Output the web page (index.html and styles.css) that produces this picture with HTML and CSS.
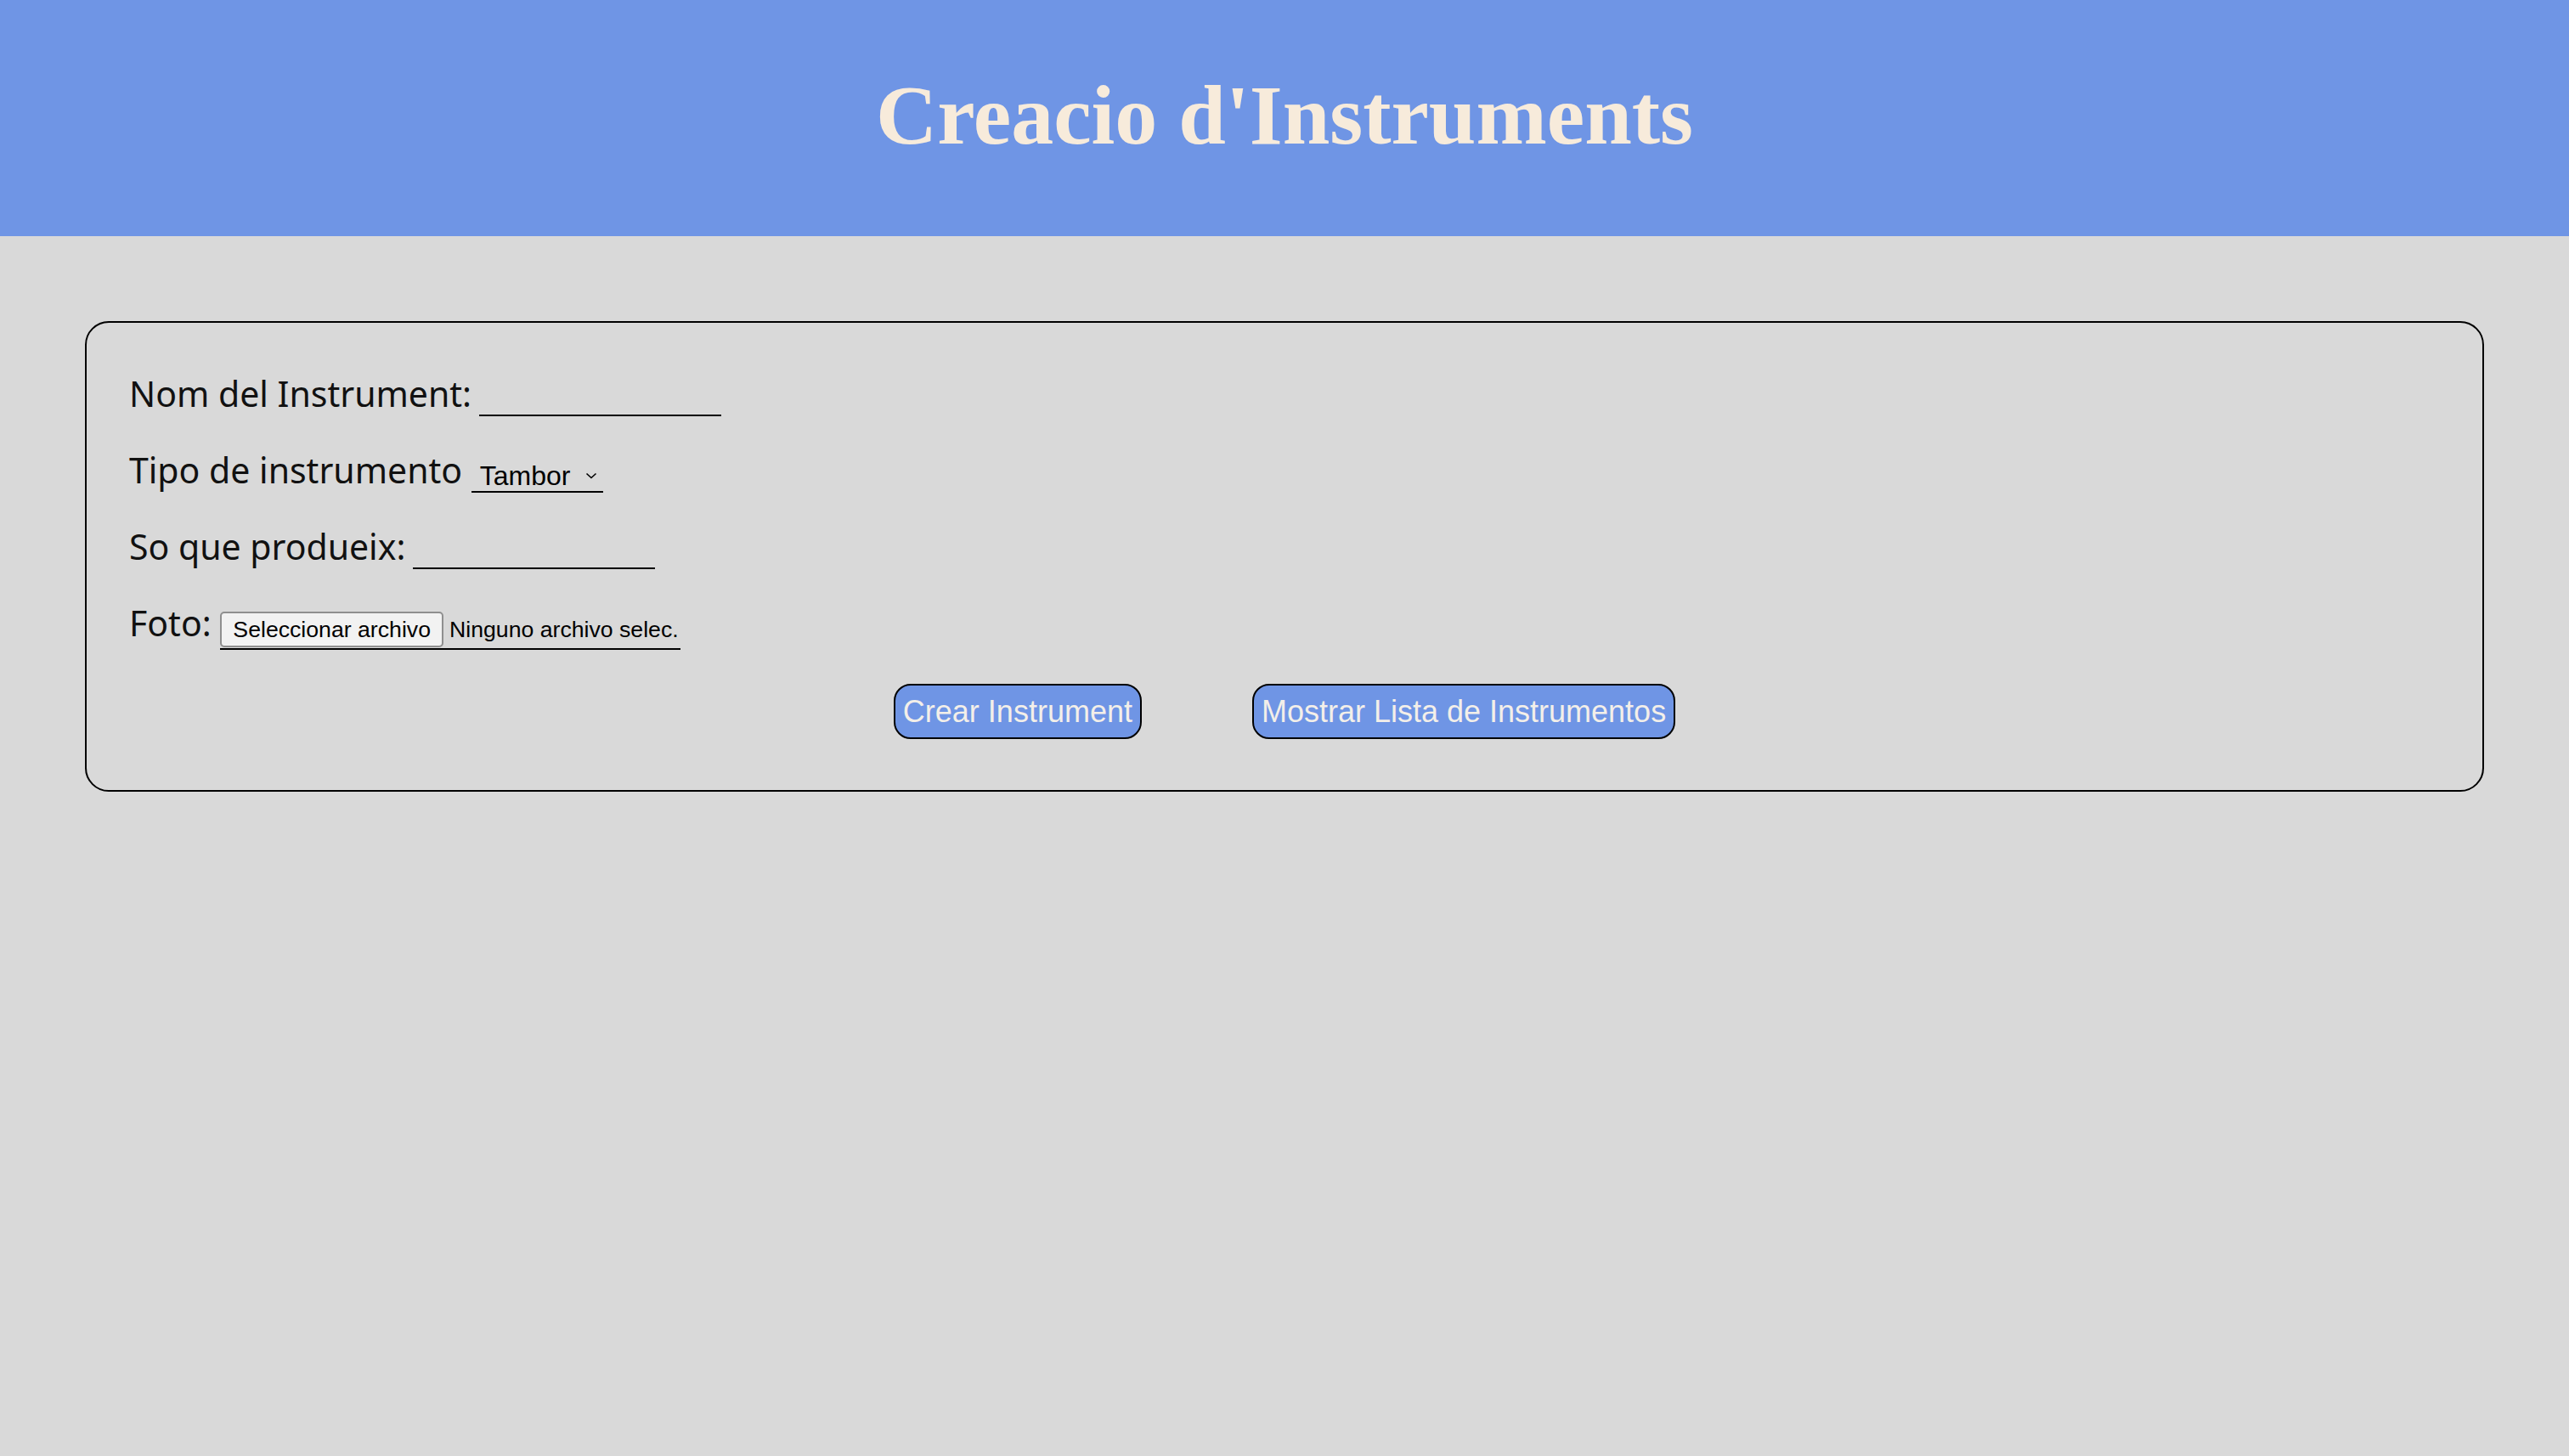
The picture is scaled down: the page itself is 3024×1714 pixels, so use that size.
FILE: index.html
```html
<!DOCTYPE html>
<html lang="ca">
<head>
<meta charset="utf-8">
<title>Creacio d'Instruments</title>
<link rel="stylesheet" href="styles.css">
</head>
<body>
<header class="top">
  <h1 class="title">Creacio d'Instruments</h1>
</header>
<main class="card">
  <form class="form">
    <div class="row">
      <label class="lbl" for="nom">Nom del Instrument:</label>
      <input class="line-input" id="nom" type="text">
    </div>
    <div class="row">
      <label class="lbl" for="tipo">Tipo de instrumento</label>
      <span class="select-wrap">
        <select class="sel" id="tipo">
          <option>Tambor</option>
          <option>Guitarra</option>
          <option>Flauta</option>
        </select>
        <svg class="chev" width="14" height="10" viewBox="0 0 14 10"><path d="M1.5 2.5 L7 7.5 L12.5 2.5" fill="none" stroke="#000" stroke-width="1.6"/></svg>
      </span>
    </div>
    <div class="row">
      <label class="lbl" for="so">So que produeix:</label>
      <input class="line-input" id="so" type="text">
    </div>
    <div class="row">
      <span class="lbl">Foto:</span>
      <label class="file">
        <input class="file-hidden" type="file">
        <span class="file-btn">Seleccionar archivo</span>
        <span class="file-txt">Ninguno archivo selec.</span>
      </label>
    </div>
    <div class="actions">
      <button class="btn" type="button">Crear Instrument</button>
      <button class="btn" type="button">Mostrar Lista de Instrumentos</button>
    </div>
  </form>
</main>
</body>
</html>
```

FILE: styles.css
```css
html, body {
  margin: 0;
  padding: 0;
}
body {
  background: #d9d9d9;
  min-height: 1714px;
  font-family: "Noto Sans", "Open Sans", sans-serif;
  color: #111;
}
.top {
  height: 278px;
  background: #6f95e5;
  display: flex;
  align-items: center;
  justify-content: center;
}
.title {
  margin: 0;
  padding-bottom: 8px;
  font-family: "Liberation Serif", "Times New Roman", serif;
  font-weight: bold;
  font-size: 100px;
  color: #f7ebdb;
}
.card {
  margin: 100px 100px 0;
  border: 2px solid #000;
  border-radius: 28px;
  padding: 55px 50px 60px;
}
.form {
  display: flex;
  flex-direction: column;
  gap: 34px;
}
.row {
  font-size: 41px;
  line-height: 56px;
  height: 56px;
  white-space: nowrap;
}
.line-input {
  width: 285px;
  height: 34px;
  box-sizing: border-box;
  background: transparent;
  border: none;
  border-bottom: 2px solid #000;
  font-family: "Liberation Sans", Arial, sans-serif;
  font-size: 27px;
  padding: 0 4px;
  outline: none;
  vertical-align: -1px;
  margin-left: -2px;
}
.select-wrap {
  display: inline-flex;
  align-items: center;
  gap: 8px;
  width: 155px;
  box-sizing: border-box;
  border-bottom: 2px solid #000;
  padding: 0 6px 0 10px;
  vertical-align: -2px;
  line-height: 36px;
}
.sel {
  appearance: none;
  -webkit-appearance: none;
  background: transparent;
  border: none;
  font-family: "Liberation Sans", Arial, sans-serif;
  font-size: 32px;
  color: #000;
  padding: 0;
  margin: 0;
  width: 116px;
  outline: none;
}
.chev {
  flex: none;
}
.file {
  display: inline-flex;
  align-items: center;
  gap: 7px;
  width: 542px;
  box-sizing: border-box;
  border-bottom: 2px solid #000;
  padding-bottom: 1px;
  vertical-align: -1px;
  line-height: normal;
}
.file-hidden {
  display: none;
}
.file-btn {
  font-family: "Liberation Sans", Arial, sans-serif;
  font-size: 26.67px;
  color: #000;
  background: #f2f2f2;
  border: 2px solid #8f8f8f;
  border-radius: 5px;
  padding: 4px 13px;
  line-height: 30px;
}
.file-txt {
  font-family: "Liberation Sans", Arial, sans-serif;
  font-size: 26.67px;
  color: #000;
}
.actions {
  display: flex;
  justify-content: center;
  gap: 130px;
  margin-top: 10px;
}
.btn {
  font-family: "Liberation Sans", Arial, sans-serif;
  font-size: 36px;
  line-height: 41px;
  color: #f3efe9;
  background: #6f95e5;
  border: 2px solid #000;
  border-radius: 20px;
  padding: 10px 9px;
}
```
